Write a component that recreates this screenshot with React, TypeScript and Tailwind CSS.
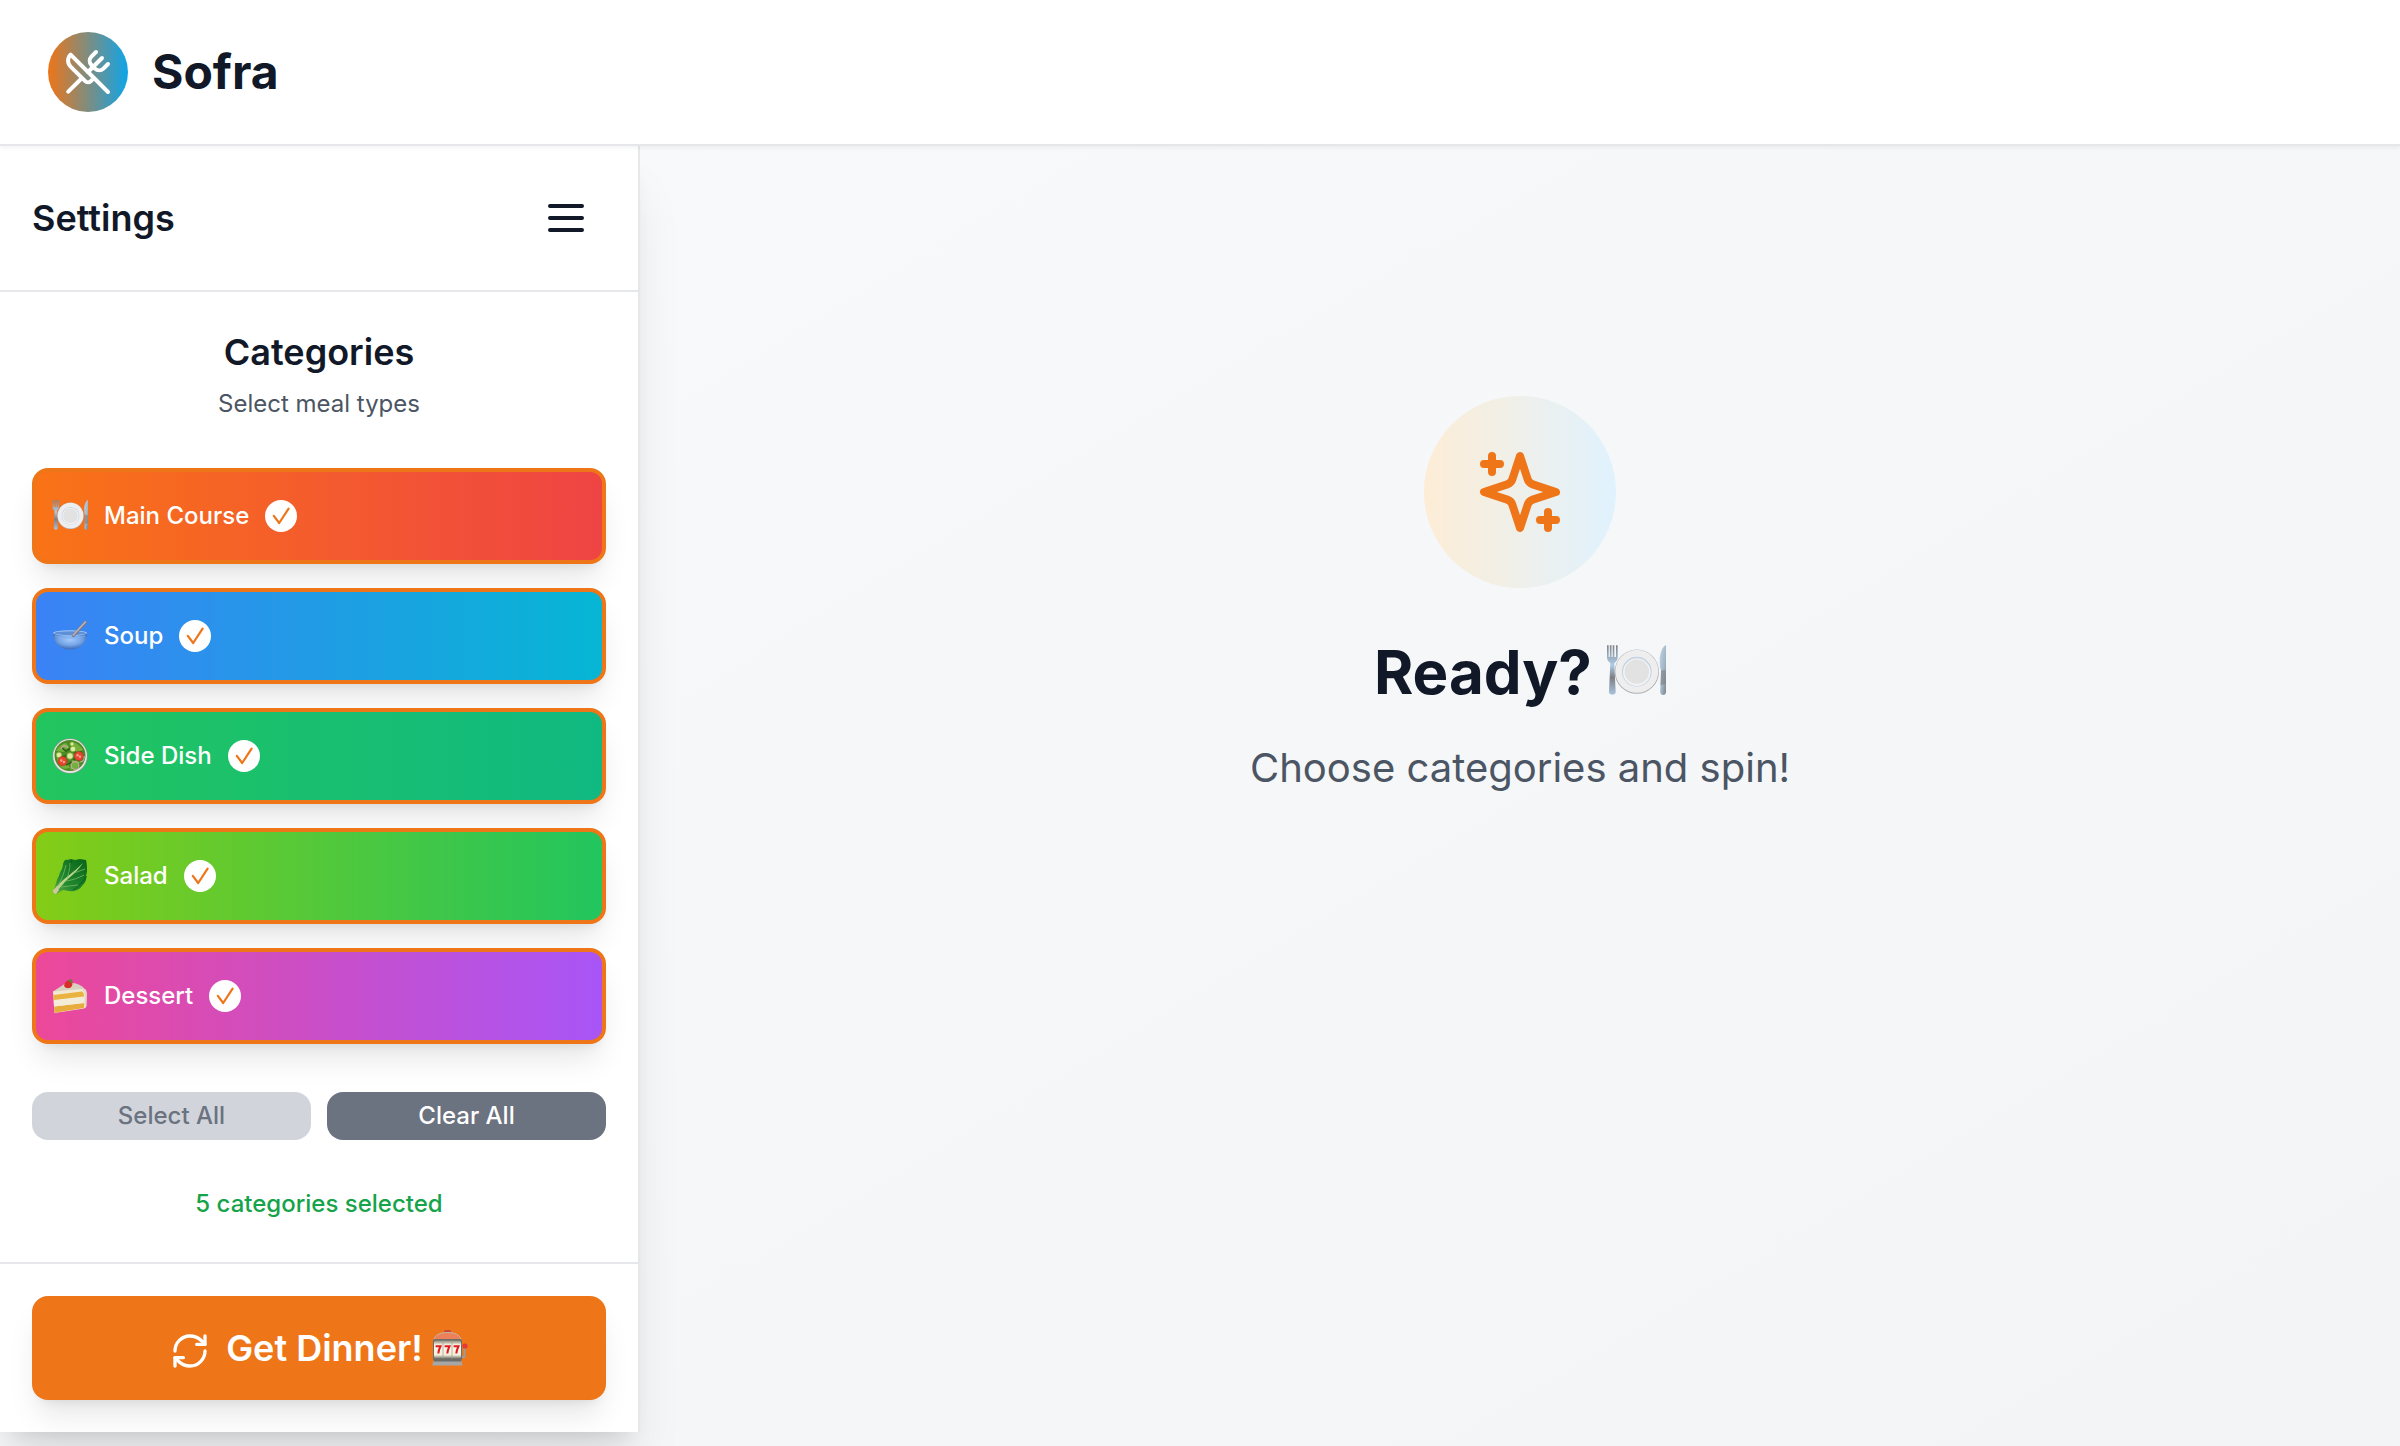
import { useState, type ReactNode } from 'react';
import { RefreshCw, UtensilsCrossed } from 'lucide-react';

function Plate({ className }: { className: string }) {
  return (
    <svg viewBox="0 0 36 36" className={className} role="img" aria-label="🍽️">
      <defs>
        <linearGradient id="metal" x1="0" y1="0" x2="0" y2="1">
          <stop offset="0" stopColor="#7f8388" />
          <stop offset="0.4" stopColor="#aecbe6" />
          <stop offset="0.65" stopColor="#7c7f84" />
          <stop offset="1" stopColor="#a9c4de" />
        </linearGradient>
        <linearGradient id="blade" x1="0" y1="0" x2="1" y2="1">
          <stop offset="0" stopColor="#c3d6e4" />
          <stop offset="0.6" stopColor="#9fb4c4" />
          <stop offset="1" stopColor="#7d8388" />
        </linearGradient>
      </defs>
      <path d="M.6 2v7c0 2 .9 3 2 3.600L1.800 30c0 2.200 4 2.200 4 0L5 12.600c1.100-.6 2-1.600 2-3.600V2h-1v7H5V2H4v7H3.300V2h-1v7h-.7V2z" fill="url(#metal)" />
      <circle cx="18.500" cy="17.800" r="13.300" fill="#aeb0b3" />
      <circle cx="18.500" cy="17.600" r="12.900" fill="#eeeeef" />
      <circle cx="18.500" cy="17.800" r="8.900" fill="#c0d2e3" />
      <circle cx="18.500" cy="18.100" r="8.300" fill="#f2f2f2" />
      <circle cx="18.500" cy="17.800" r="7.300" fill="#e2e2e2" />
      <path d="M36 2c-2 .5-3.800 5-3.800 9 0 2 .2 3.600.4 5l.5 1-.6 13c0 2.400 3.500 2.400 3.500 0z" fill="url(#blade)" />
      <path d="M33 17h2.900v8l-3.200 1z" fill="#7c7f84" opacity=".6" />
    </svg>
  );
}

function Bowl({ className }: { className: string }) {
  return (
    <svg viewBox="0 0 36 36" className={className} role="img" aria-label="🥣">
      <defs>
        <radialGradient id="bowl" cx=".5" cy=".4" r=".55">
          <stop offset="0" stopColor="#a5cbfa" />
          <stop offset="0.6" stopColor="#76a6e8" />
          <stop offset="1" stopColor="#4672bb" />
        </radialGradient>
      </defs>
      <path d="M1 15c0 8 5 14 12 16 3 .8 7 .8 10 0 7-2 12-8 12-16z" fill="url(#bowl)" />
      <ellipse cx="18" cy="15" rx="17" ry="2.800" fill="#a3caf6" />
      <ellipse cx="18" cy="15.200" rx="15.800" ry="2" fill="#5f8fd6" />
      <path d="M21.500 17.500 33.600 4.200" stroke="#77788c" strokeWidth="3.200" strokeLinecap="round" />
      <path d="M21.300 17 33.300 4" stroke="#b9b0b6" strokeWidth="1.800" strokeLinecap="round" />
      <path d="M3 18c3 1.500 9 2 15 2s12-.5 15-2" stroke="#82b1ef" strokeWidth="1" fill="none" />
    </svg>
  );
}

function SaladBowl({ className }: { className: string }) {
  return (
    <svg viewBox="0 0 36 36" className={className} role="img" aria-label="🥗">
      <circle cx="18" cy="18" r="17.600" fill="#8f958f" />
      <circle cx="18" cy="18" r="17" fill="#e3e6df" />
      <circle cx="18" cy="17.500" r="15.500" fill="#4c8a25" />
      <path d="M4 13c3-5 6-7 10-8l3 4-5 5zM20 4c5 1 9 4 11 8l-6 3-5-4zM5 20l9 2 4 8-6 1c-4-2-7-6-7-11zM20 22l8 2-3 6-7 2z" fill="#73b13a" />
      <path d="M9 9l5 4 5-3 5 5 6-1M10 19l7-2 6 5M14 27l6-3" stroke="#2f6516" strokeWidth="1.800" fill="none" />
      <g fill="#ddeba4" stroke="#7eae38" strokeWidth=".8">
        <circle cx="7" cy="17" r="2.800" />
        <circle cx="21" cy="11" r="2.800" />
        <circle cx="18" cy="18" r="3.200" />
        <circle cx="20" cy="6" r="2" />
      </g>
      <g fill="#e6452f" stroke="#b92f20" strokeWidth=".6">
        <circle cx="10.500" cy="23.200" r="4.600" />
        <circle cx="26.800" cy="18" r="4.600" />
      </g>
      <g fill="#f5a086">
        <circle cx="9.300" cy="22.500" r="1.200" />
        <circle cx="11.900" cy="24" r="1.200" />
        <circle cx="25.600" cy="17.300" r="1.200" />
        <circle cx="28" cy="18.800" r="1.200" />
      </g>
      <g fill="none" stroke="#c9a8a0" strokeWidth="1.200">
        <circle cx="23" cy="27.500" r="3.800" />
        <path d="M9 11c1-4 6-4 7-1M28 24c3 0 5-3 4-6" />
      </g>
    </svg>
  );
}

function Lettuce({ className }: { className: string }) {
  return (
    <svg viewBox="0 0 36 36" className={className} role="img" aria-label="🥬">
      <defs>
        <linearGradient id="leaf" x1="0" y1="1" x2="1" y2="0">
          <stop offset="0" stopColor="#6cae45" />
          <stop offset="0.35" stopColor="#218a30" />
          <stop offset="1" stopColor="#096318" />
        </linearGradient>
      </defs>
      <path d="M1 33c3-5 3-11 6-15 1-5 4-7 4-12 1-3 2-5 4-4l4-1 4 1 5-1 6 1c1 4 1 8 1 12l-1 4c1 4-1 7-4 10-4 6-12 6-18 4-3 0-5 3-8 4-2 0-3-1-3-3z" fill="url(#leaf)" />
      <path d="M20 2c-2 5-3 10-2 16M21 32c6-3 9-8 14-14" stroke="#064d13" strokeWidth="1" fill="none" opacity=".6" />
      <path d="M1 33c4-6 9-10 15-15 5-4 10-8 15-13-4 6-9 11-14 15-5 4-8 9-13 14-2 0-3-1-3-1z" fill="#b8d58b" />
      <path d="M6 28c3-6 6-12 8-21M15 20c2-5 3-9 3-15M14 23c7-1 12-3 18-6M9 29c6-1 11-1 17-2M22 15l11-4" stroke="#79b660" strokeWidth=".8" fill="none" />
      <path d="M1 32l4-3 2 3-3 4c-2 0-3-1-3-4z" fill="#cfc6a2" />
    </svg>
  );
}

function Cake({ className }: { className: string }) {
  return (
    <svg viewBox="0 0 36 36" className={className} role="img" aria-label="🍰">
      <path d="M1 13.500 14 5C22 3.500 31 7 34.500 13L1 15z" fill="#d9d0bd" />
      <path d="M1 13.500 29 11c3-.3 5.500.3 5.800 4l-.3 13c-.5 2-2 2.500-4 2.700L2.500 35z" fill="#f1e9d2" />
      <path d="M1.500 17 30 13.500c2 1 2 3 2 5L1.700 22z" fill="#eab341" />
      <path d="M2 28.500 32 25v5L2.600 34.800z" fill="#e6ad3c" />
      <path d="M1.700 22.500 32 19v6L2 28.500z" fill="#f3ecd8" />
      <path d="M31 11.800c3 .5 2.500 4 2.500 7l-.3 10" stroke="#e2d8bf" strokeWidth="1.500" fill="none" />
      <path d="M12 8c.5-4 3-6 5.500-5.500 3 0 3.500 3 2.500 5.500l-2 2h-4z" fill="#d82e27" />
      <path d="M16 2.500 18.500 1l2.300 1.800-1.600 2.700z" fill="#687d35" />
    </svg>
  );
}

function SlotMachine({ className }: { className: string }) {
  return (
    <svg viewBox="0 0 36 36" className={className} role="img" aria-label="🎰">
      <defs>
        <linearGradient id="reel" x1="0" y1="0" x2="0" y2="1">
          <stop offset="0" stopColor="#8c8878" />
          <stop offset="0.25" stopColor="#fbf8e9" />
          <stop offset="0.8" stopColor="#f4f0dc" />
          <stop offset="1" stopColor="#79776b" />
        </linearGradient>
      </defs>
      <rect x="12" y="0" width="7" height="3.500" rx="1.500" fill="#ca4637" />
      <path d="M2 9.500C3 5 8 2.500 15.500 2.500S28 5 29 9.500z" fill="#ed8058" />
      <path d="M2 9.500C3 5 8 2.500 15.500 2.500S28 5 29 9.500" stroke="#c6b7a9" strokeWidth="1" fill="none" />
      <path d="M32.500 17v10H29" stroke="#9a9b9b" strokeWidth="2" fill="none" />
      <circle cx="33" cy="16" r="2.600" fill="#e13a3a" />
      <rect x="1" y="9" width="29" height="22" rx="2" fill="#6d6e69" />
      <rect x="2" y="10.500" width="27" height="18" rx="1.500" fill="url(#reel)" />
      <path d="M11 10.500v18M20 10.500v18" stroke="#a5a294" strokeWidth=".8" />
      <g fill="none" stroke="#df1a20" strokeWidth="2">
        <path d="M3.600 16.300h4.900c-1.300 2.600-2 4.600-2.200 7.200" />
        <path d="M12.600 16.300h4.900c-1.300 2.600-2 4.600-2.200 7.200" />
        <path d="M21.600 16.300h4.900c-1.300 2.600-2 4.600-2.200 7.200" />
      </g>
      <path d="M1.500 31h28l1 4.500H0z" fill="#a6a7a5" />
      <path d="M2 30h27v1.500H2z" fill="#6b6c6a" />
    </svg>
  );
}

function Sparkles({ className }: { className: string }) {
  return (
    <svg
      viewBox="0 0 24 24"
      className={className}
      fill="none"
      stroke="currentColor"
      strokeWidth="2"
      strokeLinecap="round"
      strokeLinejoin="round"
      aria-hidden="true"
    >
      <path d="m12 3-1.912 5.813a2 2 0 0 1-1.275 1.275L3 12l5.813 1.912a2 2 0 0 1 1.275 1.275L12 21l1.912-5.813a2 2 0 0 1 1.275-1.275L21 12l-5.813-1.912a2 2 0 0 1-1.275-1.275L12 3Z" />
      <path d="M5 3v4M19 17v4M3 5h4M17 19h4" />
    </svg>
  );
}

function MenuIcon({ className }: { className: string }) {
  return (
    <svg
      viewBox="0 0 24 24"
      className={className}
      fill="none"
      stroke="currentColor"
      strokeWidth="2"
      strokeLinecap="round"
      aria-hidden="true"
    >
      <path d="M4 6h16M4 12h16M4 18h16" />
    </svg>
  );
}

function CheckBadge() {
  return (
    <svg viewBox="0 0 32 32" className="size-8" aria-hidden="true">
      <circle cx="16" cy="16" r="16" fill="#fff" />
      <path
        d="m8.800 15.800 5.400 7.200L23.600 8.700"
        fill="none"
        stroke="#ee7518"
        strokeWidth="2.200"
        strokeLinecap="round"
        strokeLinejoin="round"
      />
    </svg>
  );
}

type Category = { name: string; gradient: string; icon: ReactNode };

const categories: Category[] = [
  { name: 'Main Course', gradient: 'from-[#f97316] to-[#ef4444]', icon: <Plate className="size-9" /> },
  { name: 'Soup', gradient: 'from-[#3b82f6] to-[#06b6d4]', icon: <Bowl className="size-9" /> },
  { name: 'Side Dish', gradient: 'from-[#22c55e] to-[#10b981]', icon: <SaladBowl className="size-9" /> },
  { name: 'Salad', gradient: 'from-[#84cc16] to-[#22c55e]', icon: <Lettuce className="size-9" /> },
  { name: 'Dessert', gradient: 'from-[#ec4899] to-[#a855f7]', icon: <Cake className="size-9" /> },
];

const cardShadow = 'shadow-[0_20px_30px_-6px_rgb(0_0_0/0.1),0_8px_12px_-8px_rgb(0_0_0/0.1)]';

export default function App() {
  const [selected, setSelected] = useState<string[]>(categories.map((c) => c.name));
  const toggle = (name: string) =>
    setSelected((s) => (s.includes(name) ? s.filter((n) => n !== name) : [...s, name]));
  const all = selected.length === categories.length;

  return (
    <div className="flex min-h-screen flex-col bg-linear-to-br/srgb from-[#f8fafc] to-[#f3f4f6] font-['Inter',sans-serif] text-[#111827]">
      <header className="relative z-10 flex items-center gap-6 border-b-2 border-[#e5e7eb] bg-white px-12 py-8 shadow-[0_2px_4px_0_rgb(0_0_0/0.05)]">
        <div className="flex size-20 items-center justify-center rounded-full bg-linear-to-r/srgb from-[#ee7518] to-[#0ea5e9] text-white">
          <UtensilsCrossed className="size-12" />
        </div>
        <h1 className="text-5xl font-bold">Sofra</h1>
      </header>

      <div className="flex flex-1 items-start">
        <aside className="w-[640px] shrink-0 border-r-2 border-[#e5e7eb] bg-white shadow-[0_40px_50px_-10px_rgb(0_0_0/0.1),0_16px_20px_-12px_rgb(0_0_0/0.1)]">
          <div className="flex items-center justify-between border-b-2 border-[#e5e7eb] p-8">
            <h2 className="text-4xl font-semibold">Settings</h2>
            <button type="button" aria-label="Toggle menu" className="rounded-2xl p-4">
              <MenuIcon className="size-12" />
            </button>
          </div>

          <section className="flex flex-col gap-12 px-8 pt-8 pb-[42px]">
            <div className="flex flex-col gap-2 text-center">
              <h3 className="text-4xl/14 font-semibold">Categories</h3>
              <p className="text-2xl text-[#4b5563]">Select meal types</p>
            </div>

            <div className="flex flex-col gap-6">
              {categories.map((c) => (
                <button
                  key={c.name}
                  type="button"
                  aria-pressed={selected.includes(c.name)}
                  onClick={() => toggle(c.name)}
                  className={`flex h-24 items-center gap-4 rounded-2xl border-4 border-[#ee7518] bg-linear-to-r/srgb px-4 text-2xl font-medium text-white ${cardShadow} ${c.gradient}`}
                >
                  {c.icon}
                  <span>{c.name}</span>
                  {selected.includes(c.name) && <CheckBadge />}
                </button>
              ))}
            </div>

            <div className="grid grid-cols-2 gap-4 text-2xl font-medium">
              <button
                type="button"
                disabled={all}
                onClick={() => setSelected(categories.map((c) => c.name))}
                className="rounded-2xl bg-[#d1d5db] py-2 text-[#6b7280]"
              >
                Select All
              </button>
              <button
                type="button"
                onClick={() => setSelected([])}
                className="rounded-2xl bg-[#6b7280] py-2 text-white"
              >
                Clear All
              </button>
            </div>

            <p className="text-center text-2xl font-medium text-[#16a34a]">
              {selected.length} categories selected
            </p>
          </section>

          <div className="border-t-2 border-[#e5e7eb] p-8">
            <button
              type="button"
              className={`w-full rounded-2xl bg-[#ee7518] py-6 text-4xl/14 font-semibold text-white ${cardShadow}`}
            >
              <RefreshCw className="mr-4 inline size-10" />
              Get Dinner! <SlotMachine className="inline size-9 align-[-0.13em]" />
            </button>
          </div>
        </aside>

        <main className="flex flex-1 flex-col items-center px-8 pt-[250px] text-center">
          <div className="flex size-48 items-center justify-center rounded-full bg-linear-to-r/srgb from-[#fdedd6] to-[#e0f2fe] text-[#ee7518]">
            <Sparkles className="size-24" />
          </div>
          <h2 className="mt-12 text-6xl/18 font-bold">
            Ready? <Plate className="inline size-15 align-[-0.13em]" />
          </h2>
          <p className="mt-8 text-[40px]/14 text-[#4b5563]">Choose categories and spin!</p>
        </main>
      </div>
    </div>
  );
}
